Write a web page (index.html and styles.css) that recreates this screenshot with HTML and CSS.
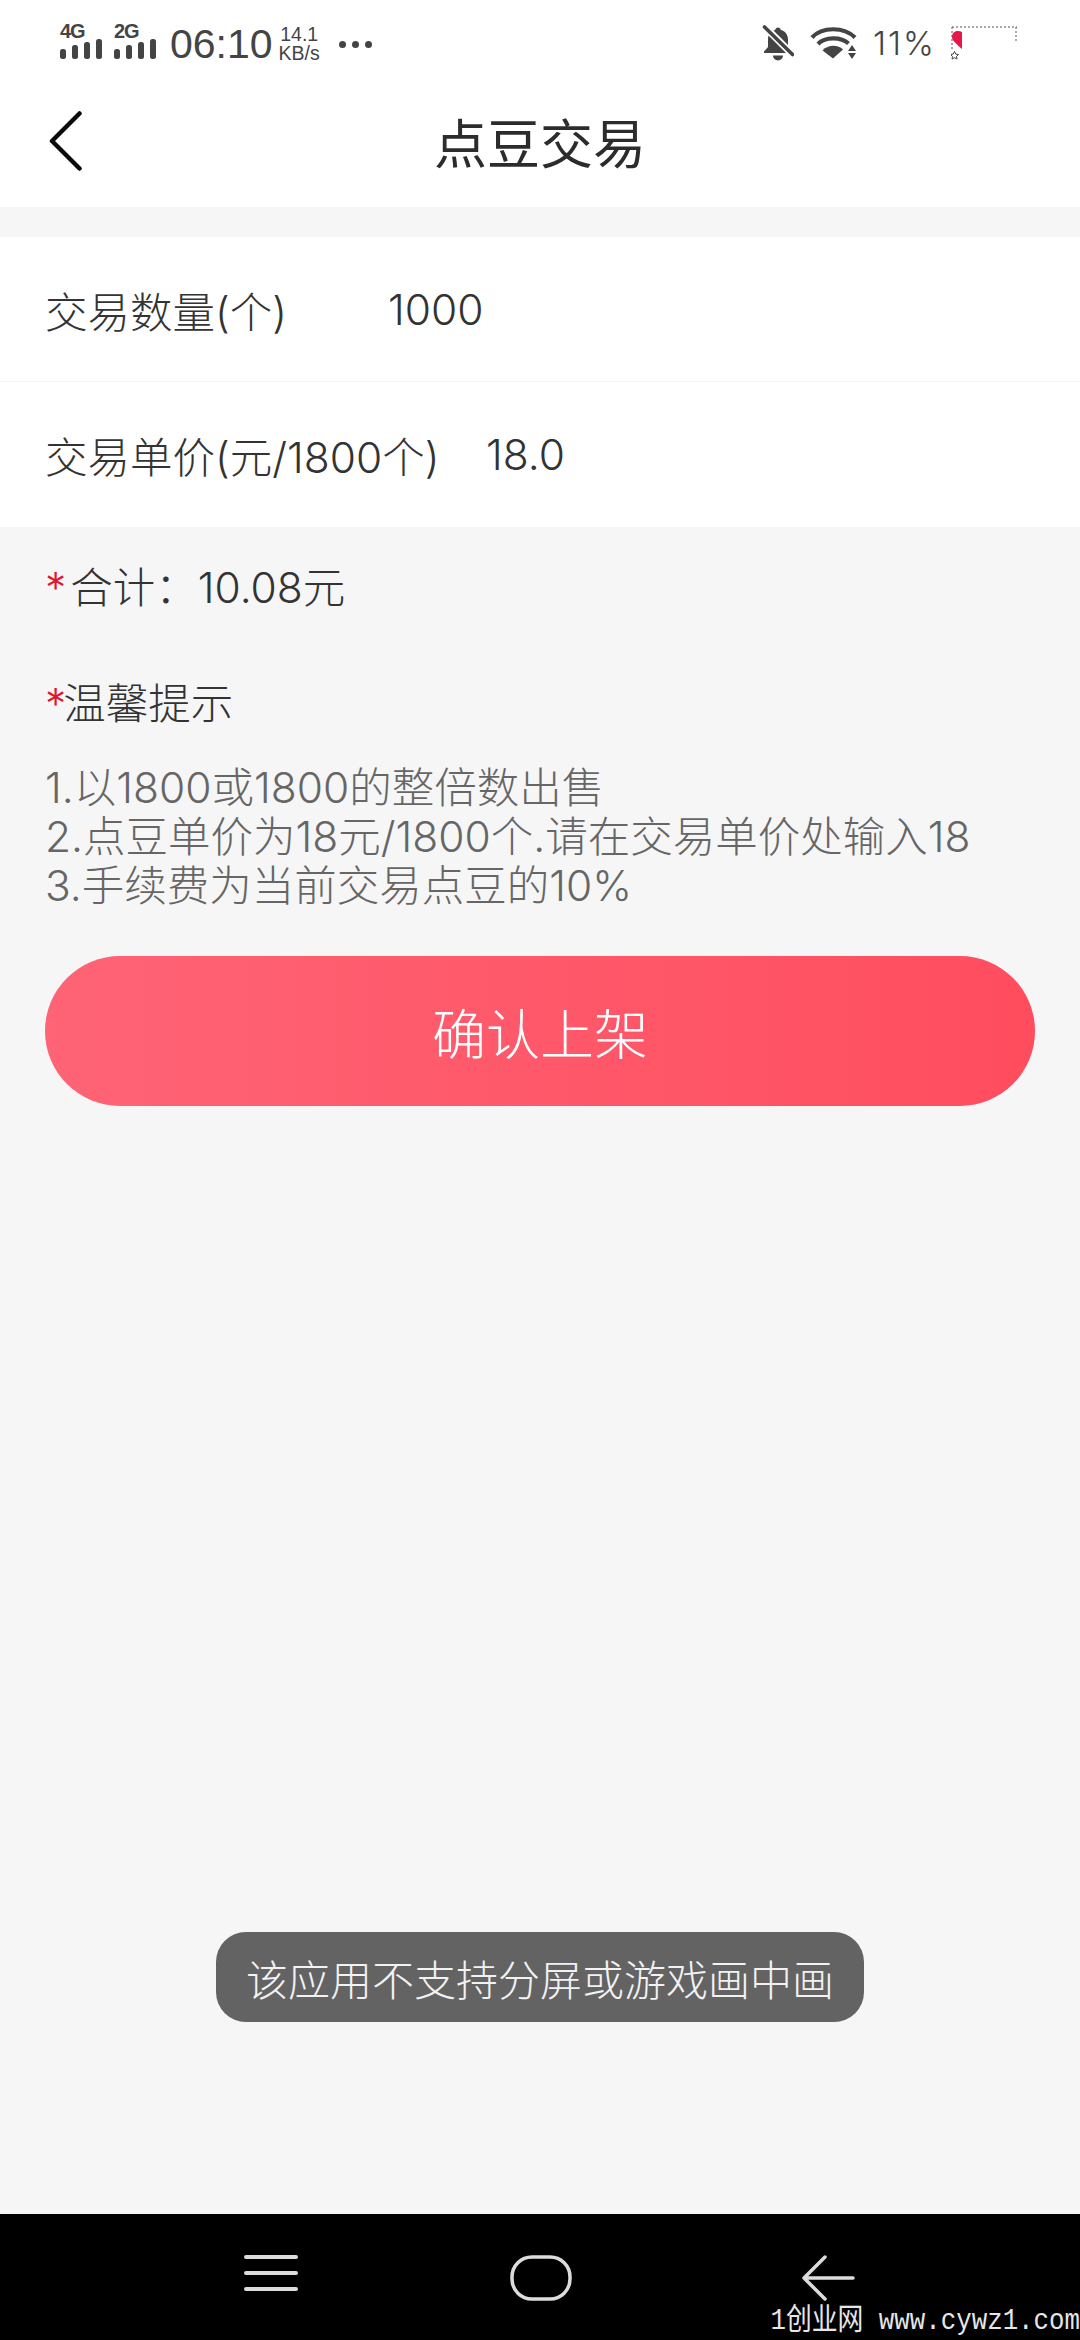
FILE: index.html
```html
<!DOCTYPE html>
<html lang="zh-CN">
<head>
<meta charset="utf-8">
<title>点豆交易</title>
<link rel="stylesheet" href="styles.css">
</head>
<body>
<div class="screen">
  <header class="top">
    <div class="status">
      <div class="status-left">
        <div class="signal"><span class="net">4G</span><svg class="bars" width="42" height="20" viewBox="0 0 42 20"><g fill="#444"><rect x="0" y="10" width="6" height="10" rx="2.5"/><rect x="12" y="6" width="6" height="14" rx="2.5"/><rect x="24" y="3" width="6" height="17" rx="2.5"/><rect x="36" y="0" width="6" height="20" rx="2.5"/></g></svg></div>
        <div class="signal second"><span class="net">2G</span><svg class="bars" width="42" height="20" viewBox="0 0 42 20"><g fill="#444"><rect x="0" y="10" width="6" height="10" rx="2.5"/><rect x="12" y="6" width="6" height="14" rx="2.5"/><rect x="24" y="3" width="6" height="17" rx="2.5"/><rect x="36" y="0" width="6" height="20" rx="2.5"/></g></svg></div>
        <span class="clock">06:10</span>
        <span class="speed"><span>14.1</span><span>KB/s</span></span>
        <span class="dots"><i></i><i></i><i></i></span>
      </div>
      <div class="status-right">
        <svg class="bell" width="32" height="36" viewBox="0 0 32 36"><path d="M16 2.5c-1.6 0-2.6 1-2.8 2.4C8.5 6 6 10 6 14.500v7.500L2 26.500v1.500h28v-1.500l-4-4.500v-7.500c0-4.500-2.500-8.500-7.200-9.600C18.600 3.500 17.600 2.500 16 2.500z" fill="#444"/><path d="M11 30.500a5 5 0 0 0 10 0z" fill="#444"/><path d="M2.500 1.500 30 29" stroke="#fff" stroke-width="7"/><path d="M2.500 2 30.500 29.500" stroke="#444" stroke-width="3.600" stroke-linecap="round"/></svg>
        <svg class="wifi" width="48" height="36" viewBox="0 0 48 36"><g fill="none" stroke="#444" stroke-width="4.200"><path d="M2 12.500C12 1.500 34 1.500 45 12.500"/><path d="M8 19C15 11.500 31 11.500 38.500 18.500"/></g><path d="M12.500 25.500C18 19.500 28 19.500 33 24.500L23 33.500z" fill="#444"/><path d="M42 20l-4 6h8zM38 28h8l-4 6z" fill="#444"/></svg>
        <span class="pct">11%</span>
        <div class="deco">
          <svg width="68" height="34" viewBox="0 0 68 34"><path d="M1 1H66M1 1V24M65 1V16" fill="none" stroke="#555" stroke-width="1" stroke-dasharray="2 2"/><path d="M11 6C7 4 1 5 1 11c0 3 3 6 10 12z" fill="#e8174a"/><path d="M2.500 26.500l1.300 2.600 2.700.4-2 1.900.5 2.600-2.500-1.300-2.500 1.300.5-2.600-2-1.900 2.700-.4z" transform="translate(1 -1)" fill="none" stroke="#444" stroke-width="1"/></svg>
        </div>
      </div>
    </div>
    <nav class="nav">
      <svg class="back" width="33" height="60" viewBox="0 0 33 60"><path d="M30.500 2.500 3 30l27.500 27.500" fill="none" stroke="#0c0c0c" stroke-width="4.500" stroke-linecap="round" stroke-linejoin="round"/></svg>
      <h1 class="title">点豆交易</h1>
    </nav>
  </header>

  <section class="form">
    <div class="row row-line"><span class="qty-label">交易数量(个)</span><span>1000</span></div>
    <div class="row"><span class="price-label">交易单价(元/1800个)</span><span>18.0</span></div>
  </section>

  <main class="content">
    <p class="total"><span class="star">*</span><span class="total-text">合计：10.08元</span></p>
    <p class="tip-head"><span class="star star-tight">*</span>温馨提示</p>
    <p class="tips">1.以1800或1800的整倍数出售<br>2.点豆单价为18元/1800个.请在交易单价处输入18<br>3.手续费为当前交易点豆的10%</p>
    <button class="confirm">确认上架</button>
    <div class="toast-wrap"><div class="toast">该应用不支持分屏或游戏画中画</div></div>
  </main>

  <footer class="sysnav">
    <svg width="54" height="36" viewBox="0 0 54 36"><g stroke="#dcdcdc" stroke-width="4" stroke-linecap="round"><path d="M2 2H52M2 18H52M2 34H52"/></g></svg>
    <svg class="home" width="62" height="46" viewBox="0 0 62 46"><rect x="2" y="2" width="58" height="42" rx="20" fill="none" stroke="#dcdcdc" stroke-width="3.500"/></svg>
    <svg width="54" height="46" viewBox="0 0 54 46"><path d="M24 2 3 23l21 21M3 23H52" fill="none" stroke="#dcdcdc" stroke-width="3.500" stroke-linecap="round" stroke-linejoin="round"/></svg>
    <span class="watermark">1创业网 www.cywz1.com</span>
  </footer>
</div>
</body>
</html>
```
FILE: styles.css
```css
* { box-sizing: border-box; }
html, body { margin: 0; padding: 0; }
body { width: 1080px; height: 2340px; overflow: hidden; font-family: Inter, "Noto Sans CJK SC", sans-serif; font-weight: 300; }
.screen { width: 1080px; height: 2340px; display: flex; flex-direction: column; background: #f6f6f6; }

.top { background: #fff; height: 207px; flex: none; }
.status { height: 70px; display: flex; justify-content: space-between; align-items: center; padding: 10px 0 0 60px; color: #444; }
.status-left, .status-right { display: flex; align-items: center; }
.signal { display: flex; flex-direction: column; width: 42px; height: 38px; justify-content: flex-end; position: relative; }
.signal.second { margin-left: 12px; }
.net { position: absolute; left: 0; top: 0; font: 700 20px/20px "Liberation Sans", sans-serif; letter-spacing: -1px; }
.clock { font: 400 41px/46px "Liberation Sans", sans-serif; margin: 8px 0 0 14px; }
.speed { display: flex; flex-direction: column; font: 400 19.500px/19px "Liberation Sans", sans-serif; margin: 7px 0 0 6px; align-items: center; }
.dots { display: flex; gap: 6px; margin: 8px 0 0 19px; }
.dots i { width: 7px; height: 7px; border-radius: 50%; background: #444; display: block; }
.status-right { padding-right: 61px; margin-top: 6px; }
.bell { margin-right: 16px; }
.wifi { margin-right: 15px; }
.pct { font: 300 33px/40px Inter, sans-serif; letter-spacing: 2px; margin-right: 15px; }
.deco { width: 68px; height: 34px; }
.deco svg { display: block; }

.nav { height: 137px; position: relative; display: flex; align-items: center; justify-content: center; }
.back { position: absolute; left: 49px; top: 41px; }
.title { margin: 0; font-size: 53px; font-weight: 400; color: #2c2c2c; padding-top: 5px; }

.form { margin-top: 30px; background: #fff; flex: none; font-size: 42.500px; color: #333; }
.row { height: 145px; display: flex; align-items: center; padding-left: 45px; }
.row-line { border-bottom: 1px solid #f6f6f6; }
.qty-label { width: 343px; }
.price-label { width: 441px; }

.content { flex: 1; position: relative; padding: 0 45px; display: flex; flex-direction: column; }
.content p { margin: 0; }
.total { font-size: 42.500px; line-height: 60px; color: #333; margin-top: 31px !important; display: flex; }
.star { color: #e3132e; }
.star-tight { letter-spacing: -3px; }
.total-text { margin-left: 4px; }
.tip-head { font-size: 42.500px; line-height: 60px; color: #333; margin-top: 56px !important; }
.tips { font-size: 42.500px; line-height: 49px; color: #666; margin-top: 29px !important; white-space: nowrap; }
.confirm { margin-top: 46px; height: 150px; width: 990px; border: 0; border-radius: 75px; color: #fff; font: inherit; font-size: 54px; background: linear-gradient(90deg, #fe6476, #ff4d5e); flex: none; }
.toast-wrap { flex: 1; display: flex; justify-content: center; align-items: flex-start; padding-top: 826px; }
.toast { width: 648px; height: 90px; border-radius: 30px; background: #636363; color: #f2f2f2; font-size: 42px; display: flex; align-items: center; justify-content: center; }

.sysnav { flex: none; height: 126px; background: #000; position: relative; display: flex; align-items: flex-start; padding: 41px 0 0 244px; }
.home { margin: 0 229px 0 212px; }
.watermark { position: absolute; right: 0; bottom: 3px; color: #e6e6e6; font: 400 30px/32px "Liberation Mono", "Noto Sans CJK SC", monospace; transform: scaleX(.86); transform-origin: right center; white-space: nowrap; }
```
